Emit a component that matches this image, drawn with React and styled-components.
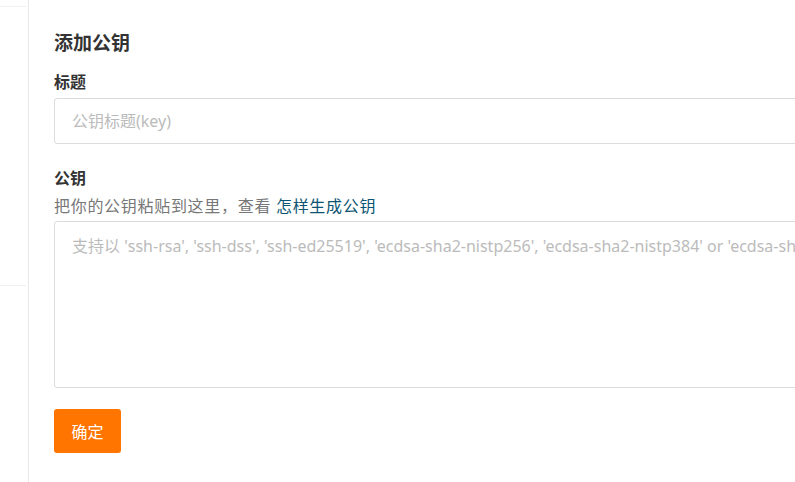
import React from "react";
import styled, { createGlobalStyle } from "styled-components";

const Global = createGlobalStyle`
  html, body { margin: 0; padding: 0; overflow: hidden; background: #fff; }
  body { font-family: "Noto Sans", "Noto Sans CJK SC", sans-serif; color: #333; }
  * { box-sizing: border-box; }
`;

const Page = styled.div`
  display: flex;
  width: 1100px;
  min-height: 482px;
`;

const Sidebar = styled.aside`
  width: 29px;
  flex: none;
  border-right: 1px solid #e8e8e8;
  padding-top: 6px;
`;

const SideMenu = styled.div`
  width: 26px;
  height: 280px;
  border-top: 1px solid #f0f0f0;
  border-bottom: 1px solid #f0f0f0;
`;

const Main = styled.main`
  flex: 1;
  padding: 30px 0 0 25px;
  display: flex;
  flex-direction: column;
  align-items: flex-start;
`;

const Title = styled.h2`
  margin: 0;
  font-size: 19px;
  line-height: 26px;
  font-weight: 700;
  color: #333;
`;

const Label = styled.label`
  display: block;
  font-size: 16px;
  line-height: 24px;
  font-weight: 700;
  color: #333;
  margin-top: ${(p) => p.$mt}px;
`;

const Hint = styled.div`
  font-size: 16px;
  line-height: 24px;
  letter-spacing: 0.7px;
  color: #777;
  margin-top: 4px;
`;

const Link = styled.a`
  color: #0b5573;
  text-decoration: none;
`;

const Input = styled.input`
  display: block;
  width: 100%;
  height: 46px;
  margin-top: 4px;
  padding: 0 17px;
  border: 1px solid #dcdcdc;
  border-radius: 3px;
  font-family: inherit;
  font-size: 16px;
  outline: none;
  &::placeholder { color: #bbb; }
`;

const TextArea = styled.textarea`
  display: block;
  width: 100%;
  height: 167px;
  margin-top: 3px;
  padding: 12px 17px;
  border: 1px solid #dcdcdc;
  border-radius: 3px;
  font-family: inherit;
  font-size: 16px;
  line-height: 24px;
  resize: none;
  outline: none;
  white-space: nowrap;
  overflow: hidden;
  &::placeholder { color: #bbb; }
`;

const Button = styled.button`
  margin-top: 21px;
  width: 67px;
  height: 44px;
  border: none;
  border-radius: 3px;
  background: #ff7500;
  color: #fff;
  font-family: inherit;
  font-size: 16px;
  cursor: pointer;
`;

export default function App() {
  return (
    <>
      <Global />
      <Page>
        <Sidebar>
          <SideMenu />
        </Sidebar>
        <Main>
          <Title>添加公钥</Title>
          <Label $mt={14}>标题</Label>
          <Input placeholder="公钥标题(key)" />
          <Label $mt={22}>公钥</Label>
          <Hint>
            把你的公钥粘贴到这里，查看 <Link href="#">怎样生成公钥</Link>
          </Hint>
          <TextArea placeholder="支持以 'ssh-rsa', 'ssh-dss', 'ssh-ed25519', 'ecdsa-sha2-nistp256', 'ecdsa-sha2-nistp384' or 'ecdsa-sha2-nistp521' 开头" />
          <Button>确定</Button>
        </Main>
      </Page>
    </>
  );
}
